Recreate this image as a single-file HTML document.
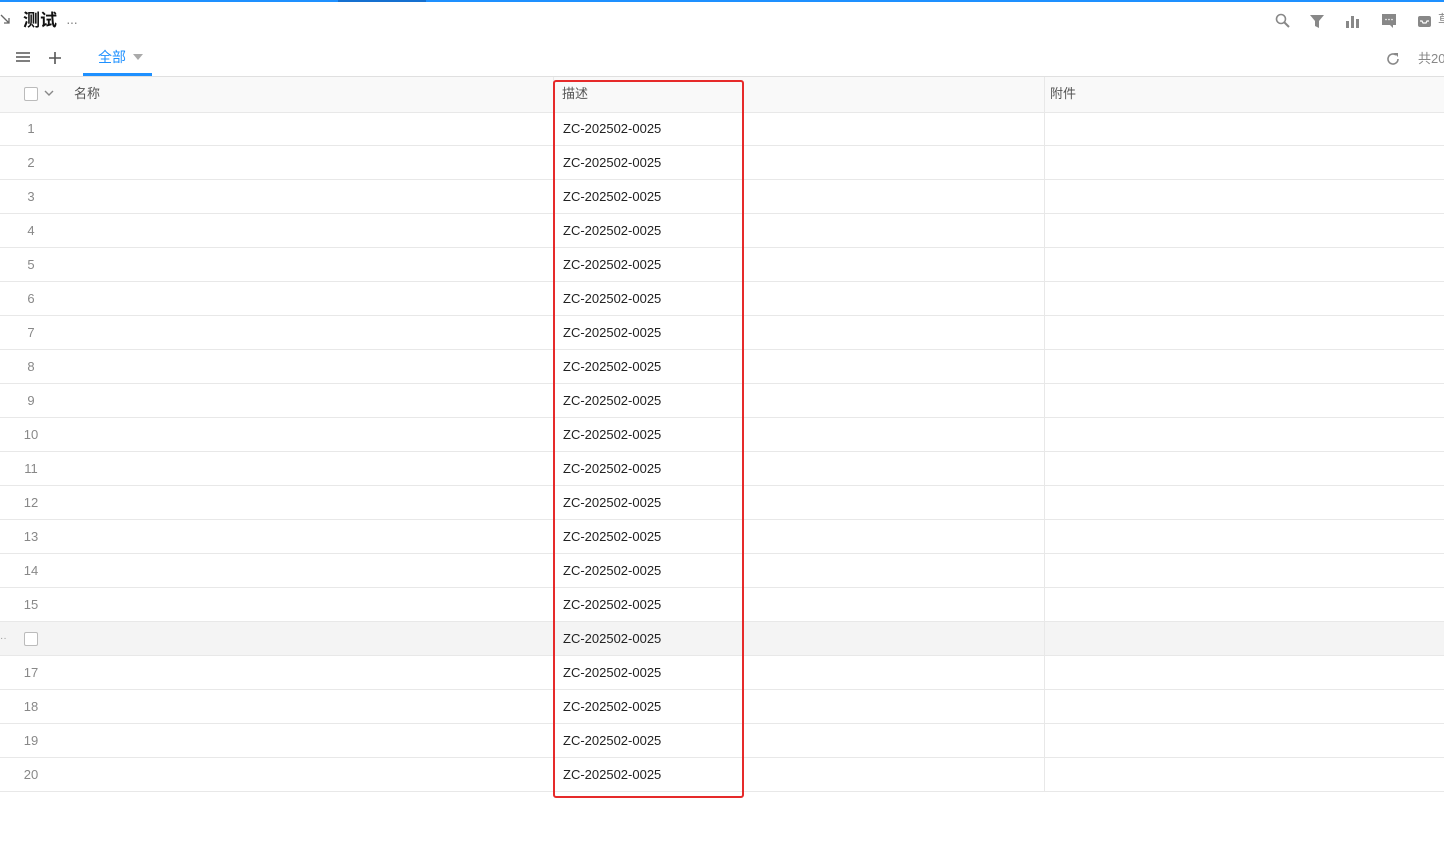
<!DOCTYPE html><html><head><meta charset="utf-8"><style>
body{margin:0;width:1444px;height:852px;overflow:hidden;background:#fff;font-family:"Liberation Sans","Noto Sans CJK SC",sans-serif;position:relative}
.a{position:absolute;line-height:1;white-space:nowrap}
.row{position:absolute;left:0;width:1444px;height:33px;border-bottom:1px solid #e8e8e8;font-size:13px;line-height:1}
.row .n{position:absolute;left:21px;top:10px;color:#888;width:20px;text-align:center}
.row .d{position:absolute;left:563px;top:10px;color:#222}
.vl{position:absolute;top:77px;height:715px;width:1px;background:#e8e8e8}
.cb{position:absolute;width:12px;height:12px;border:1px solid #bbb;border-radius:2px;background:#fff}
</style></head><body>
<div class="a" style="left:0;top:0;width:1444px;height:2px;background:#1e90ff"></div>
<div class="a" style="left:338px;top:0;width:88px;height:2px;background:#1570d0"></div>
<svg class="a" style="left:0;top:13px" width="12" height="14"><path d="M1 2L9 10M9 5V10H4" stroke="#666" stroke-width="1.3" fill="none"/></svg>
<div class="a" style="left:23px;top:12px;font-size:17px;font-weight:bold;color:#111">测试</div>
<div class="a" style="left:66px;top:15px;font-size:14px;color:#888;letter-spacing:-1px">···</div>
<svg class="a" style="left:1274px;top:12px" width="18" height="18"><circle cx="7" cy="7" r="4.5" stroke="#888" stroke-width="1.6" fill="none"/><path d="M10.5 10.5L15 15" stroke="#888" stroke-width="2"/></svg>
<svg class="a" style="left:1309px;top:13px" width="16" height="16"><path d="M1 2H15L10 8V15L6 13V8Z" fill="#888"/></svg>
<svg class="a" style="left:1345px;top:13px" width="16" height="16"><rect x="1" y="8" width="3" height="7" fill="#888"/><rect x="6" y="3" width="3" height="12" fill="#888"/><rect x="11" y="6" width="3" height="9" fill="#888"/></svg>
<svg class="a" style="left:1381px;top:13px" width="16" height="16"><path d="M1 1H15V12H12V15L9 12H1Z" fill="#888"/><circle cx="5" cy="6.5" r=".8" fill="#fff"/><circle cx="8" cy="6.5" r=".8" fill="#fff"/><circle cx="11" cy="6.5" r=".8" fill="#fff"/></svg>
<svg class="a" style="left:1417px;top:14px" width="16" height="14"><rect x="1" y="2" width="13" height="11" rx="2" fill="#888"/><path d="M3 7H5L6 9H9L10 7H12" stroke="#fff" stroke-width="1.2" fill="none"/></svg>
<div class="a" style="left:1438px;top:13px;font-size:13px;color:#888">草</div>
<svg class="a" style="left:15px;top:51px" width="16" height="14"><path d="M1 2H15M1 6H15M1 10H15" stroke="#555" stroke-width="1.6"/></svg>
<svg class="a" style="left:47px;top:50px" width="16" height="16"><path d="M8 2V14M2 8H14" stroke="#555" stroke-width="1.6"/></svg>
<div class="a" style="left:98px;top:50px;font-size:14px;color:#1e90ff">全部</div>
<svg class="a" style="left:133px;top:54px" width="10" height="6"><path d="M0 0H10L5 6Z" fill="#aaa"/></svg>
<div class="a" style="left:83px;top:73px;width:69px;height:3px;background:#1e90ff"></div>
<svg class="a" style="left:1385px;top:51px" width="16" height="16"><path d="M13 8A5 5 0 1 1 11 4" stroke="#888" stroke-width="1.6" fill="none"/><path d="M9 2H13V6Z" fill="#888"/></svg>
<div class="a" style="left:1418px;top:52px;font-size:13px;color:#888">共20</div>
<div class="a" style="left:0;top:76px;width:1444px;height:35px;background:#f9f9f9;border-top:1px solid #e0e0e0;border-bottom:1px solid #e8e8e8"></div>
<div class="cb" style="left:24px;top:87px"></div>
<svg class="a" style="left:44px;top:90px" width="10" height="7"><path d="M1 1L5 5L9 1" stroke="#888" stroke-width="1.4" fill="none"/></svg>
<div class="a" style="left:74px;top:87px;font-size:13px;color:#555">名称</div>
<div class="a" style="left:562px;top:87px;font-size:13px;color:#555">描述</div>
<div class="a" style="left:1050px;top:87px;font-size:13px;color:#555">附件</div>
<div id="rows"></div>
<div class="vl" style="left:553px"></div>
<div class="vl" style="left:1044px"></div>
<div class="a" style="left:553px;top:80px;width:187px;height:714px;border:2px solid #e62a2a;border-radius:3px"></div>
<script>
var h='';for(var i=1;i<=20;i++){var t=112+(i-1)*34;var bg=i==16?'background:#f4f4f4;':'';
var n=i==16?'<div class="a" style="left:0;top:12px;color:#999;font-size:10px">··</div><div class="cb" style="left:24px;top:10px"></div>':'<div class="n">'+i+'</div>';
h+='<div class="row" style="top:'+t+'px;'+bg+'">'+n+'<div class="d">ZC-202502-0025</div></div>';}
document.getElementById('rows').innerHTML=h;
</script>
</body></html>
